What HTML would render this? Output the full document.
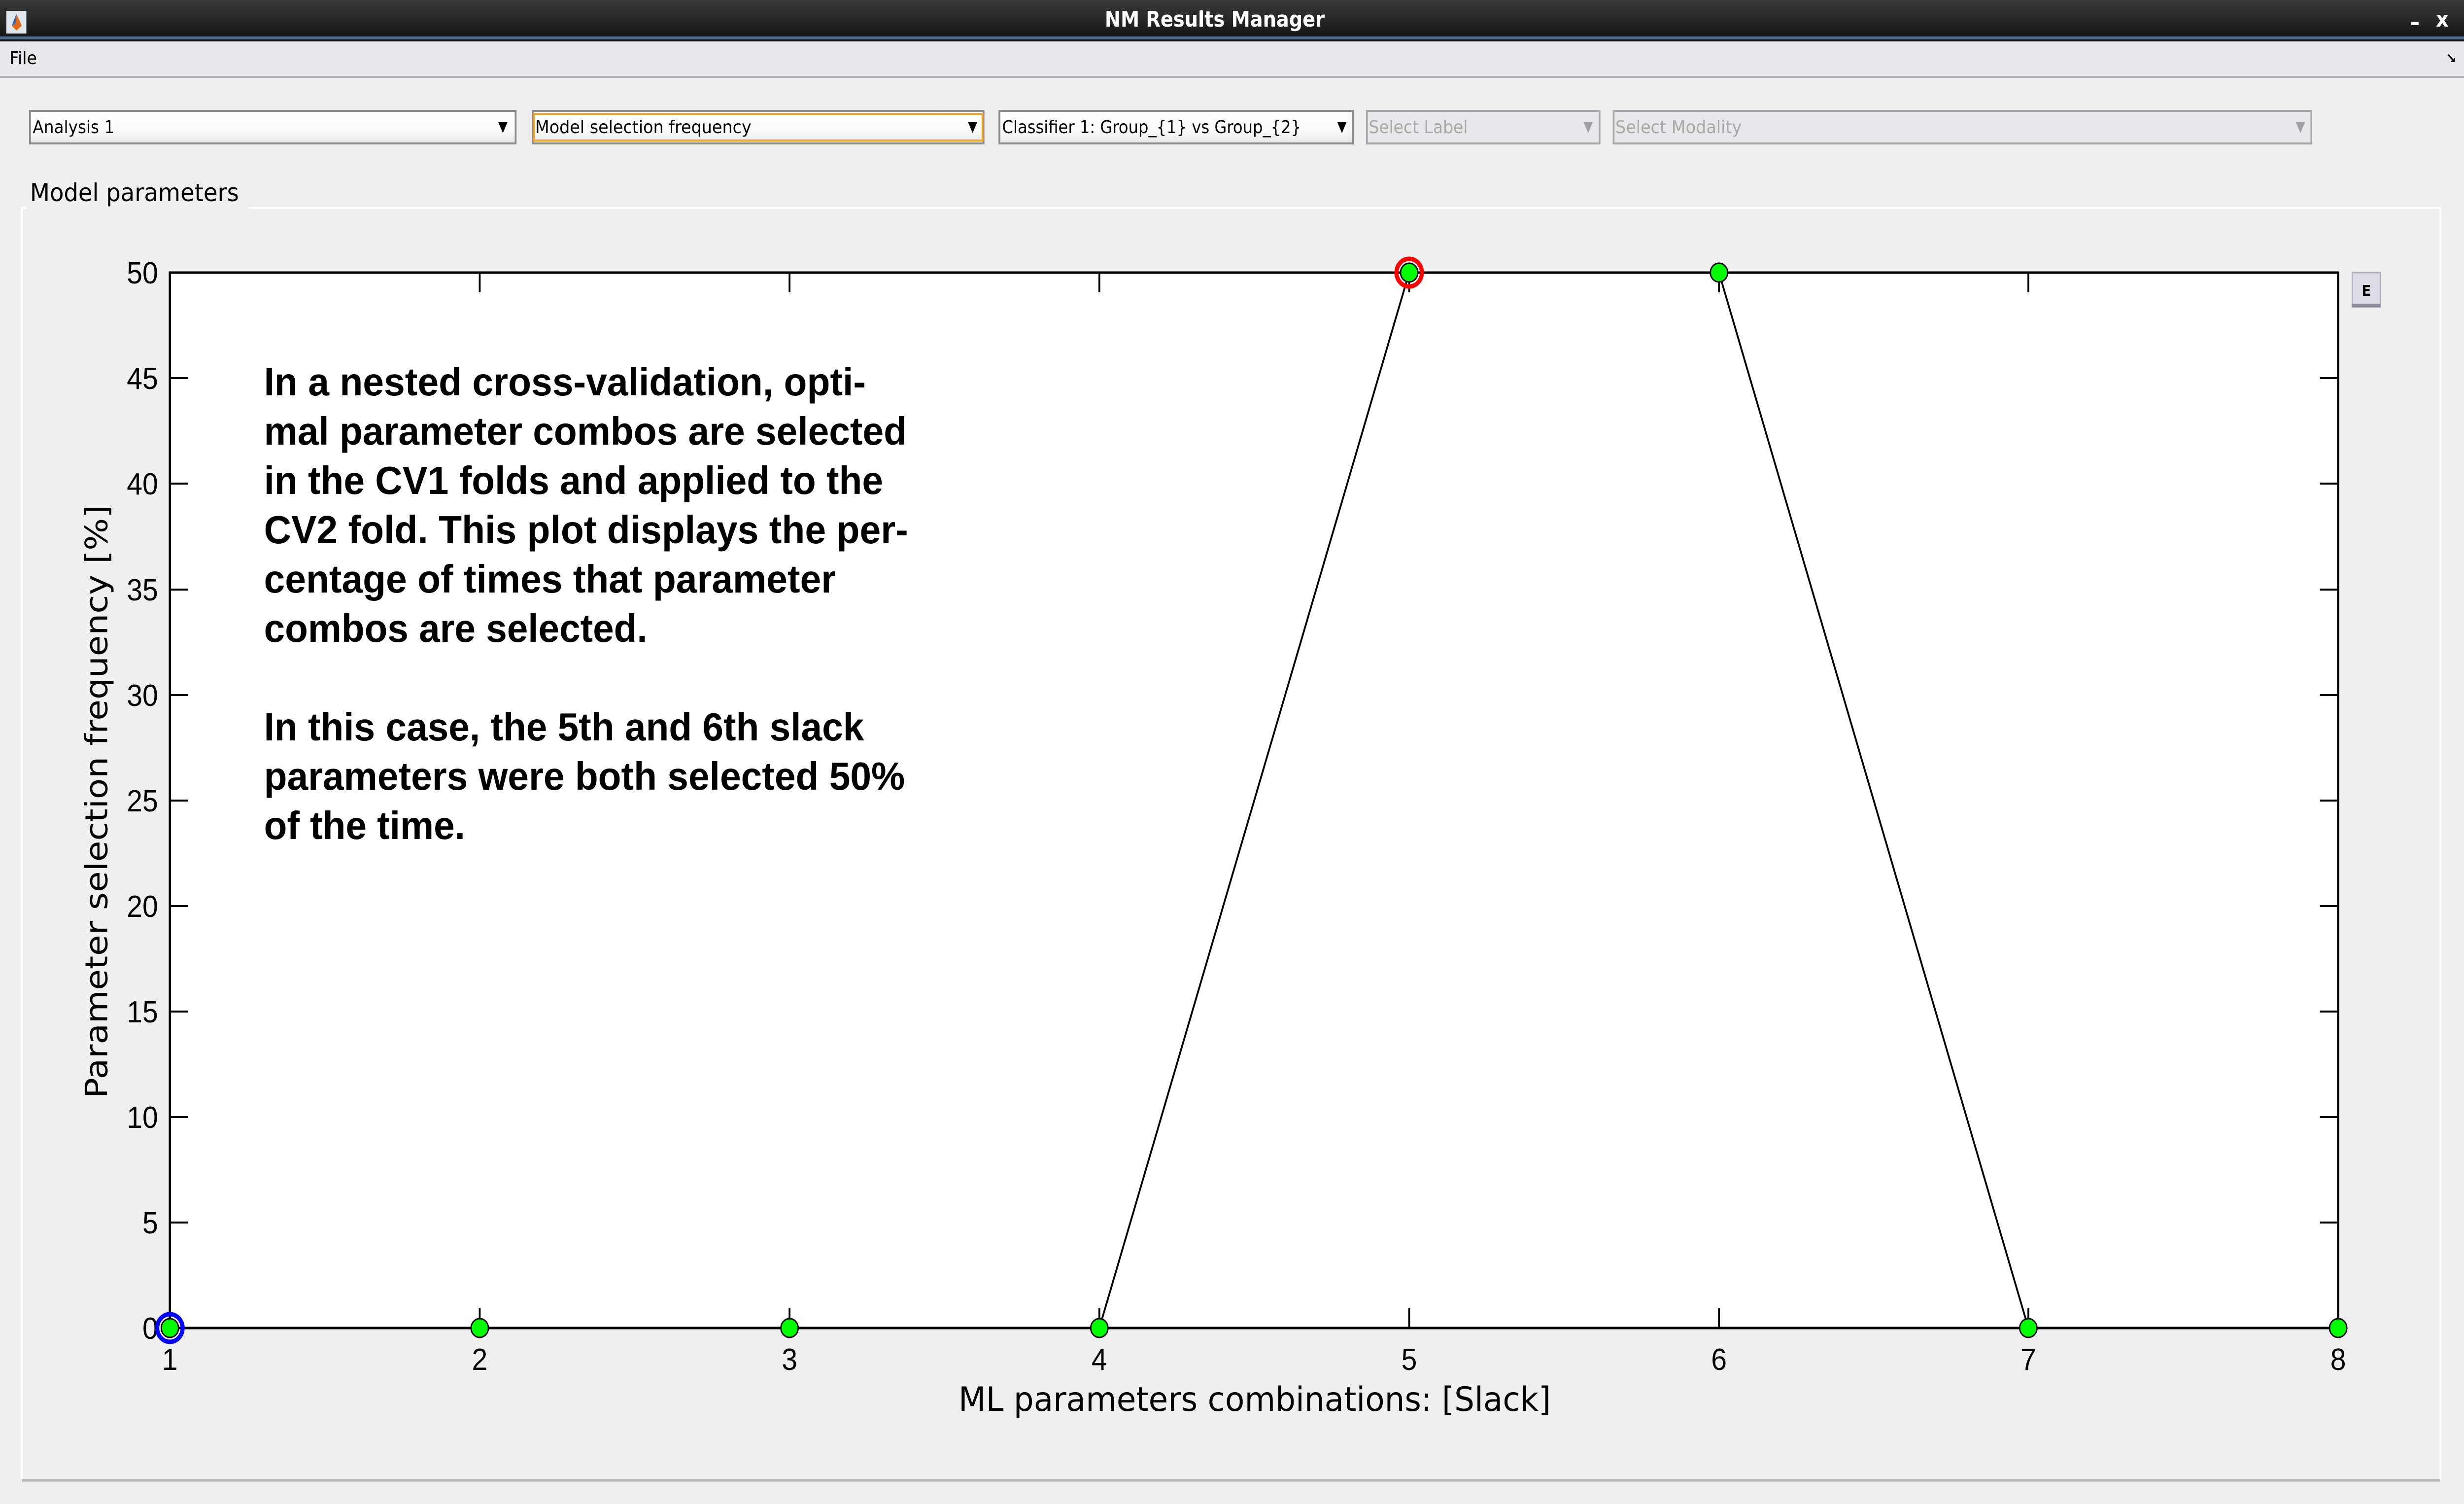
<!DOCTYPE html>
<html><head><meta charset="utf-8"><style>
html,body{margin:0;padding:0;width:100%;height:100%;overflow:hidden;background:#efefef;}
svg{display:block;position:absolute;left:0;top:0;width:100%;height:100%}
text{font-family:"Liberation Sans","DejaVu Sans",sans-serif;}
.d{font-family:"DejaVu Sans","Liberation Sans",sans-serif;}
</style></head><body>
<svg viewBox="0 0 5424 3051" preserveAspectRatio="none" xmlns="http://www.w3.org/2000/svg">
<defs>
<linearGradient id="tb" x1="0" y1="0" x2="0" y2="1"><stop offset="0" stop-color="#3a3a3a"/><stop offset="0.5" stop-color="#262626"/><stop offset="1" stop-color="#111"/></linearGradient>
<linearGradient id="dd" x1="0" y1="0" x2="0" y2="1"><stop offset="0" stop-color="#fff"/><stop offset="0.6" stop-color="#fbfbfb"/><stop offset="1" stop-color="#e6e6e6"/></linearGradient>
</defs>
<rect x="0" y="0" width="5424" height="3051" fill="#efefef"/>
<!-- title bar -->
<rect x="0" y="0" width="5424" height="83" fill="url(#tb)"/>
<rect x="0" y="74" width="5424" height="6" fill="#4a6a90"/>
<rect x="0" y="80" width="5424" height="4" fill="#111"/>
<rect x="14" y="22" width="44" height="46" fill="#dfe6ee"/>
<path d="M36 28 L26 52 L36 62 L48 52 Z" fill="#e06a1a"/><path d="M36 28 L26 52 L34 48 Z" fill="#2a6cc0"/>
<text x="2432" y="54" font-size="44" font-weight="bold" fill="#fff" textLength="484" lengthAdjust="spacingAndGlyphs" class="d">NM Results Manager</text>
<rect x="5308" y="44" width="16" height="7" fill="#fff"/>
<text x="5362" y="54" font-size="44" font-weight="bold" fill="#fff" class="d">x</text>
<!-- menu bar -->
<rect x="0" y="84" width="5424" height="72" fill="#eae8ed"/>
<rect x="0" y="154" width="5424" height="4" fill="#b4b4b4"/>
<text x="21" y="130" font-size="36" fill="#000" class="d">File</text>
<text x="5384" y="128" font-size="28" font-weight="bold" fill="#000">↘</text>
<!-- dropdowns -->
<g>
<rect x="66" y="225" width="1069" height="66" fill="url(#dd)" stroke="#8a8a8a" stroke-width="4"/>
<text x="72" y="270" font-size="36" textLength="180" lengthAdjust="spacingAndGlyphs" class="d">Analysis 1</text>
<path d="M1097 248 h20 l-10 22 z" fill="#000"/>
<rect x="1173" y="225" width="992" height="66" fill="url(#dd)" stroke="#8a8a8a" stroke-width="4"/>
<rect x="1175" y="231" width="988" height="54" fill="none" stroke="#f3a52a" stroke-width="4"/>
<text x="1178" y="270" font-size="36" textLength="476" lengthAdjust="spacingAndGlyphs" class="d">Model selection frequency</text>
<path d="M2131 248 h20 l-10 22 z" fill="#000"/>
<rect x="2200" y="225" width="778" height="66" fill="url(#dd)" stroke="#8a8a8a" stroke-width="4"/>
<text x="2206" y="270" font-size="36" textLength="658" lengthAdjust="spacingAndGlyphs" class="d">Classifier 1: Group_{1} vs Group_{2}</text>
<path d="M2944 248 h20 l-10 22 z" fill="#000"/>
<rect x="3009" y="225" width="512" height="66" fill="#e8e7ec" stroke="#a8a8a8" stroke-width="4"/>
<text x="3013" y="270" font-size="36" fill="#a8a8a8" textLength="218" lengthAdjust="spacingAndGlyphs" class="d">Select Label</text>
<path d="M3486 248 h20 l-10 22 z" fill="#a0a0a0"/>
<rect x="3552" y="225" width="1536" height="66" fill="#e8e7ec" stroke="#a8a8a8" stroke-width="4"/>
<text x="3556" y="270" font-size="36" fill="#a8a8a8" textLength="278" lengthAdjust="spacingAndGlyphs" class="d">Select Modality</text>
<path d="M5054 248 h20 l-10 22 z" fill="#a0a0a0"/>
</g>
<!-- panel -->
<path d="M48 3002 V422 H5372 V3002 Z" fill="none" stroke="#fff" stroke-width="4"/>
<line x1="48" y1="3003" x2="5372" y2="3003" stroke="#b4b4b4" stroke-width="5"/>
<rect x="58" y="360" width="490" height="70" fill="#efefef"/>
<text x="66" y="408" font-size="50" textLength="460" lengthAdjust="spacingAndGlyphs" class="d">Model parameters</text>
<!-- axes -->
<rect x="374" y="553" width="4773" height="2141" fill="#fff" stroke="#000" stroke-width="5"/>
<g stroke="#000" stroke-width="4">
<path d="M374 553h40M374 767h40M374 981h40M374 1196h40M374 1410h40M374 1624h40M374 1838h40M374 2052h40M374 2266h40M374 2480h40
M5147 553h-40M5147 767h-40M5147 981h-40M5147 1196h-40M5147 1410h-40M5147 1624h-40M5147 1838h-40M5147 2052h-40M5147 2266h-40M5147 2480h-40
M1056 2694v-40M1738 2694v-40M2420 2694v-40M3102 2694v-40M3784 2694v-40M4465 2694v-40
M1056 553v40M1738 553v40M2420 553v40M3102 553v40M3784 553v40M4465 553v40"/>
</g>
<g font-size="62" text-anchor="end" class="d">
<text x="348" y="575">50</text><text x="348" y="789">45</text><text x="348" y="1003">40</text><text x="348" y="1218">35</text><text x="348" y="1432">30</text><text x="348" y="1646">25</text><text x="348" y="1860">20</text><text x="348" y="2074">15</text><text x="348" y="2288">10</text><text x="348" y="2502">5</text><text x="348" y="2716">0</text>
</g>
<g font-size="62" text-anchor="middle" class="d">
<text x="374" y="2779">1</text><text x="1056" y="2779">2</text><text x="1738" y="2779">3</text><text x="2420" y="2779">4</text><text x="3102" y="2779">5</text><text x="3784" y="2779">6</text><text x="4465" y="2779">7</text><text x="5147" y="2779">8</text>
</g>
<text x="2110" y="2862" font-size="68" textLength="1304" lengthAdjust="spacingAndGlyphs" class="d">ML parameters combinations: [Slack]</text>
<text transform="translate(236,2228) rotate(-90)" font-size="68" textLength="1204" lengthAdjust="spacingAndGlyphs" class="d">Parameter selection frequency [%]</text>
<!-- data -->
<polyline points="374,2694 1056,2694 1738,2694 2420,2694 3102,553 3784,553 4465,2694 5147,2694" fill="none" stroke="#000" stroke-width="4"/>
<g fill="#00ff00" stroke="#000" stroke-width="3">
<circle cx="374" cy="2694" r="19"/><circle cx="1056" cy="2694" r="19"/><circle cx="1738" cy="2694" r="19"/><circle cx="2420" cy="2694" r="19"/><circle cx="3102" cy="553" r="19"/><circle cx="3784" cy="553" r="19"/><circle cx="4465" cy="2694" r="19"/><circle cx="5147" cy="2694" r="19"/>
</g>
<circle cx="374" cy="2694" r="28" fill="none" stroke="#0000ff" stroke-width="9"/>
<circle cx="3102" cy="553" r="28" fill="none" stroke="#ff0000" stroke-width="9"/>
<!-- annotation -->
<g font-size="80" font-weight="bold" lengthAdjust="spacingAndGlyphs">
<text x="581" y="802" textLength="1325" lengthAdjust="spacingAndGlyphs">In a nested cross-validation, opti-</text>
<text x="581" y="902" textLength="1415" lengthAdjust="spacingAndGlyphs">mal parameter combos are selected</text>
<text x="581" y="1002" textLength="1363" lengthAdjust="spacingAndGlyphs">in the CV1 folds and applied to the</text>
<text x="581" y="1102" textLength="1418" lengthAdjust="spacingAndGlyphs">CV2 fold. This plot displays the per-</text>
<text x="581" y="1202" textLength="1259" lengthAdjust="spacingAndGlyphs">centage of times that parameter</text>
<text x="581" y="1302" textLength="844" lengthAdjust="spacingAndGlyphs">combos are selected.</text>
<text x="581" y="1502" textLength="1321" lengthAdjust="spacingAndGlyphs">In this case, the 5th and 6th slack</text>
<text x="581" y="1602" textLength="1411" lengthAdjust="spacingAndGlyphs">parameters were both selected 50%</text>
<text x="581" y="1702" textLength="443" lengthAdjust="spacingAndGlyphs">of the time.</text>
</g>
<!-- E button -->
<rect x="5178" y="553" width="62" height="70" fill="#dcdce6" stroke="#b0b0c0" stroke-width="3"/>
<rect x="5178" y="616" width="62" height="7" fill="#8a8a9a"/>
<text x="5209" y="600" font-size="30" font-weight="bold" text-anchor="middle" class="d">E</text>
</svg>
</body></html>
